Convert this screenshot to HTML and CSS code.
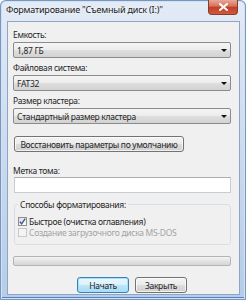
FILE: index.html
```html
<!DOCTYPE html>
<html>
<head>
<title>Форматирование</title>
<meta charset="utf-8">
<link rel="stylesheet" href="styles.css">
</head>
<body>
<div class="window">
 <div class="titlebar">
  <span class="title">Форматирование "Съемный диск (I:)"</span>
  <span class="close"><svg width="9" height="8" viewBox="0 0 9 8"><path d="M1 1 L8 7 M8 1 L1 7" stroke="#fff" stroke-width="2" stroke-linecap="square"/></svg></span>
 </div>
 <div class="client">
  <div class="label">Емкость:</div>
  <div class="combo">1,87 ГБ</div>
  <div class="label">Файловая система:</div>
  <div class="combo">FAT32</div>
  <div class="label">Размер кластера:</div>
  <div class="combo">Стандартный размер кластера</div>
  <div class="btn restore">Восстановить параметры по умолчанию</div>
  <div class="label volume">Метка тома:</div>
  <div class="edit"></div>
  <fieldset class="group">
   <legend>Способы форматирования:</legend>
   <div class="check"><span class="box checked"><svg width="7" height="7" viewBox="0 0 7 7"><path d="M0.8 3.6 L2.6 5.8 L6.2 0.6" fill="none" stroke="#3d5a9c" stroke-width="1.4"/></svg></span>Быстрое (очистка оглавления)</div>
   <div class="check disabled"><span class="box"></span>Создание загрузочного диска MS-DOS</div>
  </fieldset>
  <div class="progress"></div>
  <div class="actions">
   <span class="btn push default">Начать</span>
   <span class="btn push">Закрыть</span>
  </div>
 </div>
</div>
</body>
</html>
```

FILE: styles.css
```css
* { box-sizing:border-box; }
body {
 margin:0;
 font-family:"Noto Sans", "Open Sans", sans-serif;
 font-size:8.5px;
 letter-spacing:-0.3px;
 color:#262626;
}
.window {
 width:246px;
 height:300px;
 display:flex;
 flex-direction:column;
 padding:0 6px 5px 7px;
 background:linear-gradient(#e3ebf5, #d0deef 40%, #b6cce8);
 border-radius:6px 6px 0 0;
 box-shadow:inset 0 0 0 1px #7896c2, inset 0 0 0 2px #d2e1f2, inset 0 -3px 0 0 #5a80b8;
}
.titlebar {
 height:21px;
 display:flex;
 justify-content:space-between;
 align-items:flex-start;
}
.title {
 margin:3px 0 0 -1px;
 font-size:9px;
 letter-spacing:-0.2px;
 line-height:14px;
 color:#1a1a1a;
 text-shadow:0 0 4px #fff;
}
.close {
 width:30px;
 height:15px;
 margin-right:2px;
 display:flex;
 align-items:center;
 justify-content:center;
 border:1px solid #8a3a2c;
 border-top:none;
 border-radius:0 0 4px 4px;
 background:linear-gradient(#e7a898, #d66f5a 45%, #c23d25 50%, #d0593d);
}
.client {
 flex:1;
 display:flex;
 flex-direction:column;
 padding:6px 8px 0 5px;
 background:#f0f0f0;
 border:1px solid #8da5c6;
}
.label {
 line-height:13px;
}
.combo {
 height:16px;
 margin:1px 0 3px;
 padding:0 3px;
 display:flex;
 justify-content:space-between;
 align-items:center;
 border:1px solid #8b8b8b;
 border-radius:2px;
 background:linear-gradient(#f5f5f5, #ececec 50%, #dedede 51%, #d3d3d3);
}
.combo::after {
 content:"";
 border-top:3px solid #111;
 border-left:3px solid transparent;
 border-right:3px solid transparent;
}
.btn {
 height:16px;
 display:flex;
 align-items:center;
 justify-content:center;
 white-space:nowrap;
 border:1px solid #737373;
 border-radius:3px;
 background:linear-gradient(#f3f3f3, #ebebeb 50%, #dddddd 51%, #cfcfcf);
 box-shadow:inset 0 0 0 1px rgba(255,255,255,0.7);
}
.restore {
 width:170px;
 margin:9px 0 0 1px;
}
.volume { margin-top:12px; }
.edit {
 height:16px;
 margin-left:1px;
 background:#fff;
 border:1px solid #c7cdd5;
 border-top-color:#abadb3;
}
.group {
 margin:5px 0 0 1px;
 padding:1px 0 6px 3px;
 border:1px solid #d5dfe5;
 border-radius:3px;
 min-width:0;
}
.group legend {
 padding:0 2px;
 line-height:13px;
}
.check {
 height:11px;
 display:flex;
 align-items:center;
 gap:2px;
 line-height:11px;
}
.check:first-of-type { margin-top:4px; }
.box {
 width:9px;
 height:9px;
 display:flex;
 align-items:center;
 justify-content:center;
 border:1px solid #8f8f8f;
 background:linear-gradient(135deg, #dcdcdc, #fefefe);
}
.disabled { color:#a4a4a4; }
.disabled .box {
 border-color:#c8c8c8;
 background:#f4f4f4;
}
.progress {
 height:10px;
 margin-top:11px;
 border:1px solid #b4b4b4;
 border-radius:2px;
 background:linear-gradient(#f4f4f4, #e2e2e2 50%, #d6d6d6);
}
.actions {
 margin:11px 0 0 64px;
 display:flex;
 gap:6px;
}
.push { width:52px; }
.default {
 border-color:#3c7fb1;
 background:linear-gradient(#ecf7fd, #dbf0fc 50%, #c0e5fb 51%, #aad9f4);
 box-shadow:inset 0 0 0 1px #9fe3fd;
}
```
